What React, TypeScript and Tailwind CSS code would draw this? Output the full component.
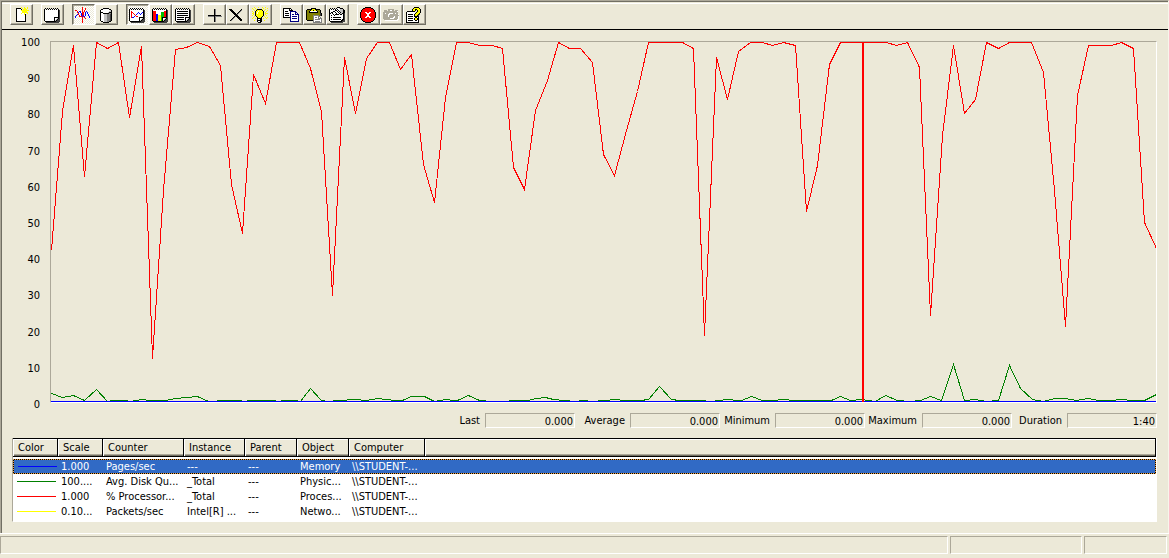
import React from "react";

const PALETTE: Record<string, string> = {
  k: "#000000",
  w: "#ffffff",
  g: "#808080",
  d: "#404040",
  l: "#c0c0c0",
  s: "#aca899",
  y: "#ffff00",
  o: "#808000",
  r: "#ff0000",
  b: "#0000ff",
  n: "#000080",
  e: "#00c000",
};

const ICONS: Record<string, string[]> = {
  blank: [
    "........y..y..y.",
    "...kkkkk.y.yy.y.",
    "...kwwwwk.yyyy..",
    "...kwwwwyyyyyyyy",
    "...kwwwwwyyyyy..",
    "...kwwwwwyyyyyy.",
    "...kwwwwywwyw.y.",
    "...kwwwwwwwyk...",
    "...kwwwwwwwwk...",
    "...kwwwwwwwwk...",
    "...kwwwwwwwwk...",
    "...kwwwwwwwwk...",
    "...kwwwwwwwwk...",
    "...kwwwwwwwwk...",
    "...kkkkkkkkkk...",
    "................",
  ],
  pad: [
    "................",
    ".k.k.k.k.k.k.k..",
    "kwkwkwkwkwkwkwk.",
    "kwwwwwwwwwwwwwkd",
    "kwwwwwwwwwwwwwkd",
    "kwwwwwwwwwwwwwkd",
    "kwwwwwwwwwwwwwkd",
    "kwwwwwwwwwwwwwkd",
    "kwwwwwwwwwwwwwkd",
    "kwwwwwwwwwwwwwkd",
    "kwwwwwwwwwkkkkkd",
    "kwwwwwwwwwkwwlkd",
    "kwwwwwwwwwkwlkdd",
    "kwwwwwwwwwklkddd",
    ".kkkkkkkkkkkdddd",
    "..ddddddddddddd.",
  ],
  pulse: [
    ".......r........",
    ".......r..r.....",
    ".......r..r.....",
    "rr.....r.r......",
    "..r.bb.r.r.b....",
    "..rb.b.rr.b.b...",
    "...r..brr.b.b...",
    "..br..brr.b..b..",
    ".b..r.brb.b..b..",
    "b...rrrbrb....b.",
    "b......r.r....b.",
    ".......r..r.....",
    ".......r........",
    ".......r........",
    ".......r........",
    ".......r........",
  ],
  cylinder: [
    "................",
    ".....kkkkkk.....",
    "...kkwwwwwwkk...",
    "..kwwwwwwwwwlk..",
    "..kwwwwwwwwllk..",
    "..kkkwwwwwlkkk..",
    "..kwwkkkkkkggk..",
    "..kwwwlllgggdk..",
    "..kwwwlllgggdk..",
    "..kwwwlllgggdk..",
    "..kwwwlllgggdk..",
    "..kwwwlllgggdk..",
    "..kwwwlllgggdk..",
    "..kwwwlllgggdk..",
    "...kkwlllggkk...",
    ".....kkkkkk.....",
  ],
  graph: [
    "................",
    ".k.k.k.k.k.k.k..",
    "kwkwkwkwkwkwkwk.",
    "kwwwwwwwwwwwwwkd",
    "kwrwwwwwwwwwwwkd",
    "kwrrwwwwwbwwwbkd",
    "kwrwrwwwbwbwbwkd",
    "kwrwwrwbwwwbwwkd",
    "kwrwwwrwwwwwwwkd",
    "kwrwwbwrrwwwwwkd",
    "kwrbbwwwwwkkkkkd",
    "kwwwwwwwwwkwwlkd",
    "kwwwwwwwwwkwlkdd",
    "kwwwwwwwwwklkddd",
    ".kkkkkkkkkkkdddd",
    "..ddddddddddddd.",
  ],
  bars: [
    "................",
    ".k.k.k.k.k.k.k..",
    "kwkwkwkwkwkwkwk.",
    "kwwwwwwwwwwwwwkd",
    "krrrwwwwwwwwrrkd",
    "krrrwwwwweeerrkd",
    "krrrwwwwweeerrkd",
    "krrrbbwwweeerrkd",
    "krrrbbyyyeeerrkd",
    "krrrbbyyyeeerrkd",
    "krrrbbyyyekkkkkd",
    "krrrbbyyyekwwlkd",
    "krrrbbyyyekwlkdd",
    "krrrbbyyyeklkddd",
    ".kkkkkkkkkkkdddd",
    "..ddddddddddddd.",
  ],
  report: [
    "................",
    ".k.k.k.k.k.k.k..",
    "kwkwkwkwkwkwkwk.",
    "kwwwwwwwwwwwwwkd",
    "kwkkkkkkkkkkkwkd",
    "kwwwwwwwwwwwwwkd",
    "kwkkkkkkkkkkkwkd",
    "kwwwwwwwwwwwwwkd",
    "kwkkkkkkkkkkkwkd",
    "kwwwwwwwwwwwwwkd",
    "kwkkkkkkkwkkkkkd",
    "kwwwwwwwwwkwwlkd",
    "kwkkkkkkkwkwlkdd",
    "kwwwwwwwwwklkddd",
    ".kkkkkkkkkkkdddd",
    "..ddddddddddddd.",
  ],
  plus: [
    "................",
    "................",
    "........kg......",
    "........kg......",
    "........kg......",
    "........kg......",
    "........kg......",
    "........kg......",
    "..kkkkkkkkkkkkk.",
    "..ggggggkggggggg",
    "........kg......",
    "........kg......",
    "........kg......",
    "........kg......",
    "........kg......",
    "................",
  ],
  cross: [
    "................",
    "................",
    "kkk.........k...",
    ".kkk.......kg...",
    "..kkk.....kg....",
    "...kkk...kg.....",
    "....kkk.kg......",
    ".....kkkg.......",
    "......kkk.......",
    ".....kgkkk......",
    "....kg..kkk.....",
    "...kg....kkk....",
    "..kg......kkk...",
    ".kg........kk...",
    "................",
    "................",
  ],
  bulb: [
    "..y...y...y..y..",
    "y..y.......y...y",
    ".y..ykkkkky..y..",
    "..y.kyyyyyk.y..y",
    "y..kyywyyyyk..y.",
    ".y.kywyyyyyk.y..",
    "yy.kywyyyyyk.yyy",
    ".y.kyyyyyyyk.y..",
    "y..kyyyyyyyk..y.",
    "..y.kyyyyyk.y...",
    ".y...kyyyk...y.y",
    "y..y.kkkkk.y..y.",
    ".....kwwkk......",
    "..y..kkkkk..y...",
    ".....kwwkk......",
    "......kkk.......",
  ],
  copy: [
    "................",
    "kkkkkkkk........",
    "kwwwwwkwk.......",
    "kwwwwwkkkk......",
    "kwkkkwwnnnnnn...",
    "kwwwwwwnwwwwnn..",
    "kwkkkkwnwwwwnwn.",
    "kwwwwwwnwnnwnnnn",
    "kwkkkkwnwwwwwwwn",
    "kwwwwwwnwnnnnnwn",
    "kkkkkkknwwwwwwwn",
    ".......nwnnnnnwn",
    ".......nwwwwwwwn",
    ".......nwwwwwwwn",
    ".......nnnnnnnnn",
    "................",
  ],
  paste: [
    "................",
    ".....kkkkk......",
    ".kkkkkyyykkkkk..",
    "koookyykyykoook.",
    "kookwwwwwwwkook.",
    "kookkkkkkkkkook.",
    "kooooooooooooodk",
    "kooooooooooooodk",
    "kooooooggggggodk",
    "koooooogwwwwgg..",
    "koooooogwggwgwg.",
    "koooooogwwwwgggg",
    "koooooogwgggggwg",
    ".kkkkkkgwwwwwwwg",
    ".......gwgggggwg",
    ".......ggggggggg",
  ],
  settings: [
    "........kkk.....",
    ".k.k.k.kwwlkkk..",
    "kwkwkwkwkwwlllk.",
    "kwwwwwkkwkwlllkk",
    "kwwwkkwwkwklllkk",
    "kwkkwwkwwkwkllkk",
    "kkwkwwwkwwkllkkd",
    "kwwwkwkkkkwkkwkd",
    "kwkwwkwwwwwwwwkd",
    "kwwwwwwwwwwwwwkd",
    "kwkwkkkkkkkkwwkd",
    "kwwwwwwwwwwwwwkd",
    "kwkwkkkkkkkkwkkd",
    "kwwwwwwwwwwwkkdd",
    ".kkkkkkkkkkkkddd",
    "..dddddddddddd..",
  ],
  stop: [
    ".....kkkkkk.....",
    "...kkrrrrrrkk...",
    "..krrrrrrrrrrk..",
    ".krrrrrrrrrrrrk.",
    ".krrrrrrrrrrrrk.",
    "krrrrwwrrwwrrrrk",
    "krrrrrwwwwrrrrrk",
    "krrrrrrwwrrrrrrk",
    "krrrrrrwwrrrrrrk",
    "krrrrrwwwwrrrrrk",
    "krrrrwwrrwwrrrrk",
    ".krrrrrrrrrrrrk.",
    ".krrrrrrrrrrrrk.",
    "..krrrrrrrrrrk..",
    "...kkrrrrrrkk...",
    ".....kkkkkk.....",
  ],
  camera: [
    "................",
    "................",
    ".....ssssss.....",
    ".sss.sswwss.sss.",
    ".sssssssssssssw.",
    "sssssssssssssss.",
    "sswssswwwwsswss.",
    "ssssswwssssssssw",
    "ssssswssssssssss",
    "ssssswssssswsssw",
    "sssssssssswwsssw",
    "ssssssswwwwssssw",
    ".sssssssssssssww",
    "..wwwwwwwwwwwww.",
    "................",
    "................",
  ],
  help: [
    "........kkkkk...",
    ".......kyyyyyk..",
    "......kyykkyyyk.",
    "......kyyk.kyyk.",
    ".kkkkkkkk..kyyk.",
    "kwwwwwwww.kyyyk.",
    "kwwwwwwwwkyyyk..",
    "kwkkkkkwkyyykd..",
    "kwwwwwwwkyykd...",
    "kwkkkkkwkkkkk...",
    "kwwwwwwwwkkwk...",
    "kwkkkkkwkyykk...",
    "kwwwwwwwkyykk...",
    "kwkkkkkwwkkwk...",
    "kwwwwwwwwwwwk...",
    "kkkkkkkkkkkkk...",
  ],
};

function PixelIcon({ name }: { name: string }) {
  return (
    <svg viewBox="0 0 16 16" className="block size-4 shrink-0" shapeRendering="crispEdges" aria-hidden="true">
      {ICONS[name].flatMap((row, y) =>
        row.split("").map((c, x) =>
          c === "." ? null : <rect key={`${x}-${y}`} x={x} y={y} width="1" height="1" fill={PALETTE[c]} />,
        ),
      )}
    </svg>
  );
}

type Tool = { icon: string; label: string; pressed?: boolean; disabled?: boolean };

const TOOL_GROUPS: Tool[][] = [
  [{ icon: "blank", label: "New Counter Set" }],
  [{ icon: "pad", label: "Clear Display" }],
  [
    { icon: "pulse", label: "View Current Activity", pressed: true },
    { icon: "cylinder", label: "View Log Data" },
  ],
  [
    { icon: "graph", label: "View Graph", pressed: true },
    { icon: "bars", label: "View Histogram" },
    { icon: "report", label: "View Report" },
  ],
  [
    { icon: "plus", label: "Add" },
    { icon: "cross", label: "Delete" },
    { icon: "bulb", label: "Highlight" },
  ],
  [
    { icon: "copy", label: "Copy Properties" },
    { icon: "paste", label: "Paste Counter List" },
    { icon: "settings", label: "Properties" },
  ],
  [
    { icon: "stop", label: "Freeze Display" },
    { icon: "camera", label: "Update Data", disabled: true },
    { icon: "help", label: "Help" },
  ],
];

const RAISED =
  "border border-t-white border-l-white border-r-[#716f64] border-b-[#716f64] shadow-[inset_-1px_-1px_0_#aca899]";
const PRESSED =
  "border border-t-[#716f64] border-l-[#716f64] border-r-white border-b-white shadow-[inset_1px_1px_0_#aca899] bg-[repeating-conic-gradient(#ffffff_0_25%,#ece9d8_0_50%)] bg-[length:2px_2px]";

function Toolbar() {
  return (
    <div role="toolbar" aria-label="Monitor" className="flex gap-2 border-t border-b border-t-white border-b-black pb-1 pl-2">
      {TOOL_GROUPS.map((group, i) => (
        <div key={i} className="flex">
          {group.map((t) => (
            <button
              key={t.icon}
              type="button"
              aria-label={t.label}
              aria-pressed={t.pressed}
              disabled={t.disabled}
              className={`flex h-[21px] w-[23px] items-center pl-0.5 ${t.pressed ? PRESSED : RAISED}`}
            >
              <PixelIcon name={t.icon} />
            </button>
          ))}
        </div>
      ))}
    </div>
  );
}

const PROCESSOR =
  "0,208 11,69 22,3 33,134 45,0 56,6 67,0 78,75 90,4 101,316 112,148 124,7 135,5 146,0 158,4 169,23 180,142 191,191 202,32 214,61 225,0 248,0 259,26 270,69 281,253 293,15 304,71 315,16 326,0 338,0 349,27 360,12 372,122 383,160 394,55 405,0 417,0 428,3 441,3 451,6 462,125 473,147 484,68 496,38 507,0 518,6 529,6 541,20 552,112 563,133 575,88 586,49 597,0 631,0 642,6 653,293 665,15 676,57 687,9 699,0 711,0 721,3 732,0 744,3 755,169 766,123 778,22 789,0 835,0 845,3 856,0 868,25 879,273 891,93 902,3 913,71 924,57 935,0 947,6 958,0 980,0 992,30 1003,148 1014,284 1026,53 1037,3 1060,3 1070,0 1082,6 1093,180 1105,206";

const DISK =
  "0,351 11,355 22,353 33,358 45,347 56,359 62,358 73,358 79,359 90,357 99,358 114,358 124,356 146,354 157,359 175,358 186,358 195,359 197,358 220,358 229,359 231,358 243,358 249,359 259,346 270,358 276,359 288,358 304,357 315,358 326,356 344,358 351,358 360,354 373,354 383,359 394,357 402,358 406,358 417,353 428,358 440,359 476,358 485,356 494,355 502,357 513,358 524,359 532,358 540,359 554,358 563,357 573,358 589,358 597,357 608,344 620,357 628,358 648,358 660,359 668,358 676,357 686,358 690,358 700,354 711,358 721,358 732,357 743,358 773,358 780,358 789,354 799,358 810,357 824,359 834,353 846,358 858,359 869,358 879,354 890,358 902,322 913,358 924,357 935,359 947,358 958,323 969,346 981,357 992,359 1003,356 1014,356 1025,358 1037,356 1047,358 1060,358 1070,357 1080,358 1093,358 1105,352";

const TICKS = [100, 90, 80, 70, 60, 50, 40, 30, 20, 10, 0];

function Chart() {
  return (
    <div className="flex pr-[11px] pl-4">
      <div className="flex w-[22px] flex-col justify-between pt-1.5 text-right leading-[13px]">
        {TICKS.map((t) => (
          <span key={t}>{t}</span>
        ))}
      </div>
      <div className="ml-[10px] min-w-0 flex-1 pt-[11px] pb-2">
        <div className="border border-t-[#aca899] border-r-white border-b-white border-l-[#aca899]">
          <svg
            viewBox="-0.5 -0.5 1105 360"
            preserveAspectRatio="none"
            className="block h-[360px] w-full"
            shapeRendering="crispEdges"
            role="img"
            aria-label="Counter history"
            fill="none"
          >
            <polyline points={DISK} stroke="#008000" vectorEffect="non-scaling-stroke" />
            <polyline points={PROCESSOR} stroke="#ff0000" vectorEffect="non-scaling-stroke" />
            <line x1="-1" x2="1106" y1="359" y2="359" stroke="#0000ff" vectorEffect="non-scaling-stroke" />
            <rect x="810.5" y="-0.5" width="2" height="360" fill="#ff0000" />
          </svg>
        </div>
      </div>
    </div>
  );
}

const STATS = [
  { label: "Last", value: "0.000", width: "w-[145px]" },
  { label: "Average", value: "0.000", width: "w-[145px]" },
  { label: "Minimum", value: "0.000", width: "w-[145px]" },
  { label: "Maximum", value: "0.000", width: "w-[147px]" },
  { label: "Duration", value: "1:40", width: "w-[145px]" },
];

function Stats() {
  return (
    <div className="mt-0.5 flex justify-end pr-[11px] leading-[15px]">
      {STATS.map(({ label, value, width }) => (
        <div key={label} className={`flex items-center justify-end gap-[5px] ${width}`}>
          <label htmlFor={label}>{label}</label>
          <output
            id={label}
            className="block h-[15px] w-[90px] border border-t-[#aca899] border-r-white border-b-white border-l-[#aca899] pr-px text-right"
          >
            {value}
          </output>
        </div>
      ))}
    </div>
  );
}

const HEADERS = ["Color", "Scale", "Counter", "Instance", "Parent", "Object", "Computer", ""];

const ROWS = [
  { line: "bg-[#0000ff]", name: "Blue", cells: ["1.000", "Pages/sec", "---", "---", "Memory", "\\\\STUDENT-..."] },
  { line: "bg-[#008000]", name: "Green", cells: ["100....", "Avg. Disk Qu...", "_Total", "---", "Physic...", "\\\\STUDENT-..."] },
  { line: "bg-[#ff0000]", name: "Red", cells: ["1.000", "% Processor...", "_Total", "---", "Proces...", "\\\\STUDENT-..."] },
  { line: "bg-[#ffff00]", name: "Yellow", cells: ["0.10...", "Packets/sec", "Intel[R] ...", "---", "Netwo...", "\\\\STUDENT-..."] },
];

function Legend() {
  return (
    <div className="mt-[10px] mr-[11px] ml-[10px] border-r border-b border-l border-r-white border-b-white border-l-[#aca899] bg-white pb-0.5">
      <table className="w-full table-fixed border-separate border-spacing-0 text-left">
        <colgroup>
          <col className="w-[45px]" />
          <col className="w-[45px]" />
          <col className="w-[81px]" />
          <col className="w-[61px]" />
          <col className="w-[52px]" />
          <col className="w-[52px]" />
          <col className="w-[76px]" />
          <col />
        </colgroup>
        <thead>
          <tr>
            {HEADERS.map((h, i) => (
              <th
                key={i}
                scope="col"
                className="h-[19px] border-t border-r border-b border-black bg-[#ece9d8] p-0 pt-px pl-[5px] font-normal leading-4 shadow-[inset_1px_1px_0_#ffffff,inset_0_-1px_0_#716f64,inset_0_-2px_0_#aca899]"
              >
                {h}
              </th>
            ))}
          </tr>
        </thead>
        <tbody>
          <tr aria-hidden="true">
            <td colSpan={8} className="h-0.5 p-0" />
          </tr>
          {ROWS.map((row, i) => {
            const selected = i === 0;
            const cell = selected
              ? "border-y border-transparent bg-[#316ac5] bg-clip-padding leading-[13px]"
              : "leading-[15px]";
            return (
              <tr
                key={row.name}
                aria-selected={selected}
                className={
                  selected
                    ? "h-[15px] bg-[repeating-conic-gradient(#000000_0_25%,#f0a040_0_50%)] bg-[length:2px_2px] text-white"
                    : "h-[15px]"
                }
              >
                <td className={`p-0 pl-1 ${cell} ${selected ? "border-l" : ""}`}>
                  <div role="img" aria-label={row.name} className={`h-px w-[39px] ${row.line}`} />
                </td>
                {row.cells.map((c, j) => (
                  <td key={j} className={`overflow-hidden p-0 pl-[3px] whitespace-nowrap ${cell}`}>
                    {c}
                  </td>
                ))}
                <td className={`p-0 ${cell} ${selected ? "border-r" : ""}`} />
              </tr>
            );
          })}
        </tbody>
      </table>
    </div>
  );
}

function StatusBar() {
  const pane = "h-[18px] border border-t-[#aca899] border-r-white border-b-white border-l-[#aca899]";
  return (
    <footer className="flex gap-0.5 border-t border-white pt-0.5 pr-0.5 pb-1">
      <div className={`flex-1 ${pane}`} />
      <div className={`w-[132px] ${pane}`} />
      <div className={`w-[83px] ${pane}`} />
    </footer>
  );
}

export default function App() {
  return (
    <div className="min-h-screen bg-[#ece9d8] font-['Tahoma','DejaVu_Sans_Condensed','DejaVu_Sans',sans-serif] text-[11px] text-black">
      <main className="border-t border-r border-l border-t-[#aca899] border-r-[#f7f5ec] border-l-[#aca899]">
        <div className="border-t border-l border-[#716f64] pt-px pb-[11px]">
          <Toolbar />
          <Chart />
          <Stats />
          <Legend />
        </div>
      </main>
      <StatusBar />
    </div>
  );
}
